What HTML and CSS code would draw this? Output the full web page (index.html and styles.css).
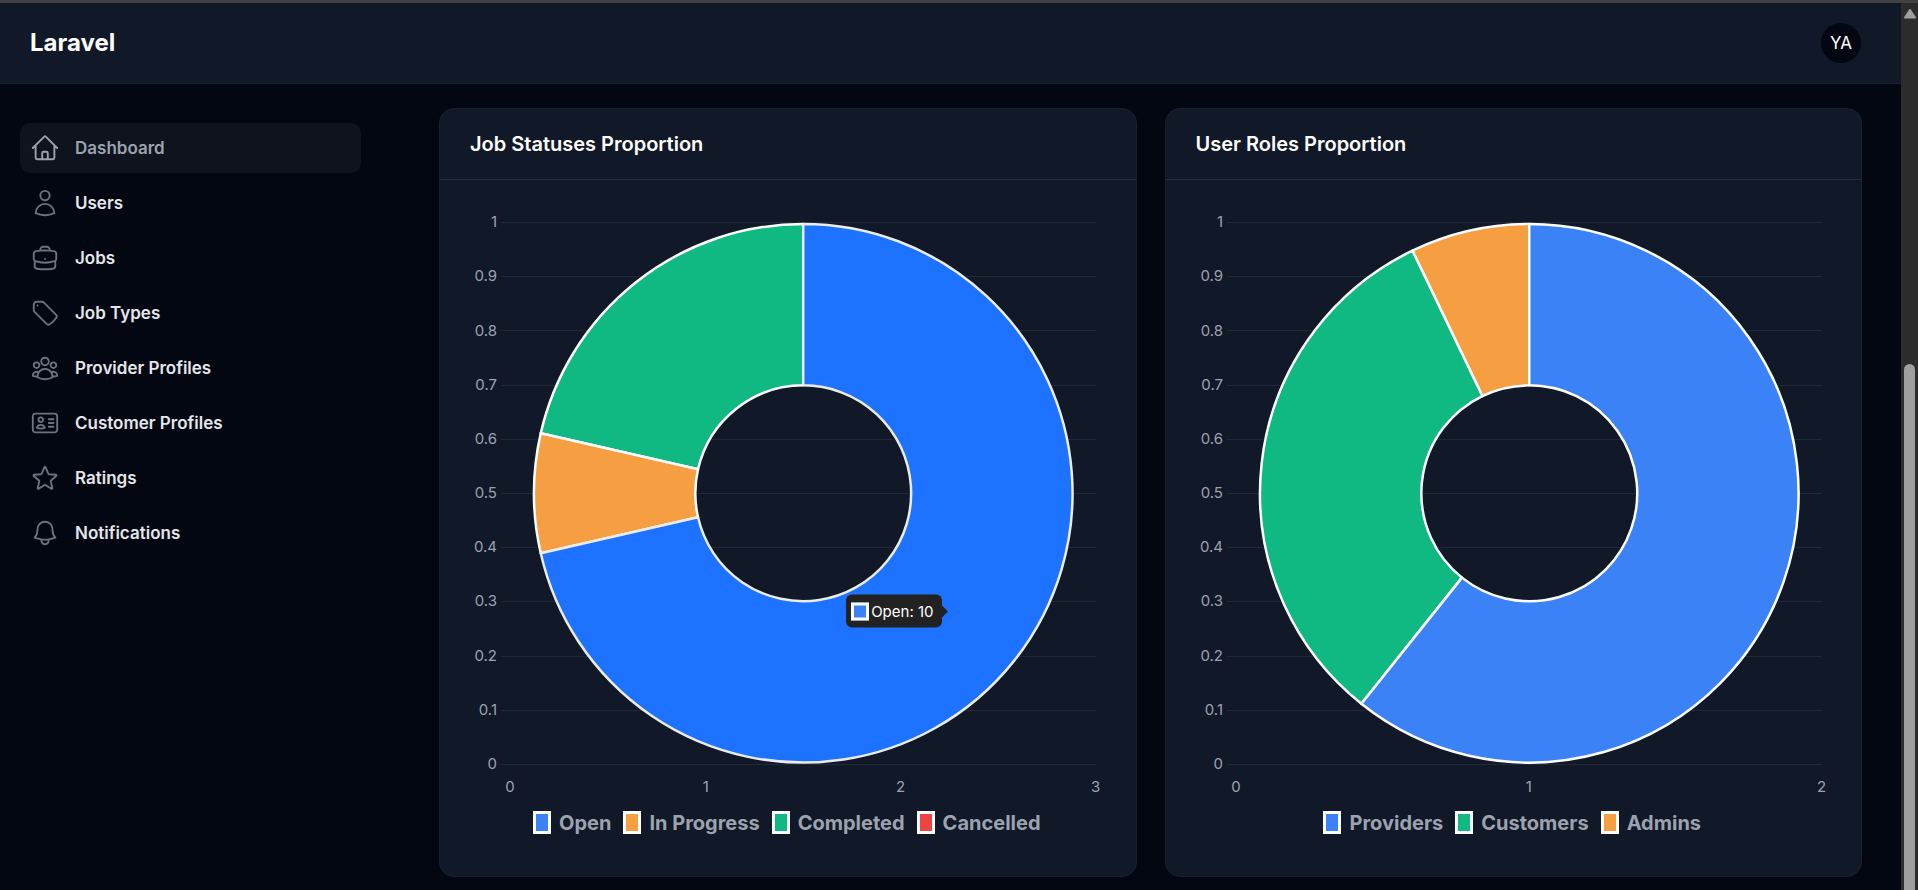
FILE: index.html
```html
<!DOCTYPE html>
<html lang="en">
<head>
<meta charset="utf-8">
<title>Dashboard - Laravel</title>
<meta name="viewport" content="width=device-width, initial-scale=1">
<link rel="stylesheet" href="styles.css">
</head>
<body>
<div class="window">
  <div class="page">
    <header class="topbar">
      <a class="brand" href="#">Laravel</a>
      <button class="avatar" type="button" aria-label="User menu">YA</button>
    </header>
    <div class="layout">
      <nav class="sidebar" aria-label="Main">
        <a class="nav-item is-active" href="#" aria-current="page">
          <svg class="nav-icon" viewBox="0 0 24 24" aria-hidden="true"><path d="m2.25 12 8.954-8.955c.44-.439 1.152-.439 1.591 0L21.75 12M4.5 9.75v10.125c0 .621.504 1.125 1.125 1.125H9.75v-4.875c0-.621.504-1.125 1.125-1.125h2.25c.621 0 1.125.504 1.125 1.125V21h4.125c.621 0 1.125-.504 1.125-1.125V9.75M8.25 21h8.25"/></svg>
          <span>Dashboard</span>
        </a>
        <a class="nav-item" href="#">
          <svg class="nav-icon" viewBox="0 0 24 24" aria-hidden="true"><path d="M15.75 6a3.75 3.75 0 1 1-7.5 0 3.75 3.75 0 0 1 7.5 0ZM4.501 20.118a7.5 7.5 0 0 1 14.998 0A17.933 17.933 0 0 1 12 21.75c-2.676 0-5.216-.584-7.499-1.632Z"/></svg>
          <span>Users</span>
        </a>
        <a class="nav-item" href="#">
          <svg class="nav-icon" viewBox="0 0 24 24" aria-hidden="true"><path d="M20.25 14.15v4.25c0 1.094-.787 2.036-1.872 2.18-2.087.277-4.216.42-6.378.42s-4.291-.143-6.378-.42c-1.085-.144-1.872-1.086-1.872-2.18v-4.25m16.5 0a2.18 2.18 0 0 0 .75-1.661V8.706c0-1.081-.768-2.015-1.837-2.175a48.114 48.114 0 0 0-3.413-.387m4.5 8.006c-.194.165-.42.295-.673.38A23.978 23.978 0 0 1 12 15.75c-2.648 0-5.195-.429-7.577-1.22a2.016 2.016 0 0 1-.673-.38m0 0A2.18 2.18 0 0 1 3 12.489V8.706c0-1.081.768-2.015 1.837-2.175a48.111 48.111 0 0 1 3.413-.387m7.5 0V5.25A2.25 2.25 0 0 0 13.5 3h-3a2.25 2.25 0 0 0-2.25 2.25v.894m7.5 0a48.667 48.667 0 0 0-7.5 0M12 12.75h.008v.008H12v-.008Z"/></svg>
          <span>Jobs</span>
        </a>
        <a class="nav-item" href="#">
          <svg class="nav-icon" viewBox="0 0 24 24" aria-hidden="true"><path d="M9.568 3H5.25A2.25 2.25 0 0 0 3 5.25v4.318c0 .597.237 1.17.659 1.591l9.581 9.581c.699.699 1.78.872 2.607.33a18.095 18.095 0 0 0 5.223-5.223c.542-.827.369-1.908-.33-2.607L11.16 3.66A2.25 2.25 0 0 0 9.568 3Z"/><path d="M6 6h.008v.008H6V6Z"/></svg>
          <span>Job Types</span>
        </a>
        <a class="nav-item" href="#">
          <svg class="nav-icon" viewBox="0 0 24 24" aria-hidden="true"><path d="M18 18.72a9.094 9.094 0 0 0 3.741-.479 3 3 0 0 0-4.682-2.72m.94 3.198.001.031c0 .225-.012.447-.037.666A11.944 11.944 0 0 1 12 21c-2.17 0-4.207-.576-5.963-1.584A6.062 6.062 0 0 1 6 18.719m12 0a5.971 5.971 0 0 0-.941-3.197m0 0A5.995 5.995 0 0 0 12 12.75a5.995 5.995 0 0 0-5.058 2.772m0 0a3 3 0 0 0-4.681 2.72 8.986 8.986 0 0 0 3.74.477m.94-3.197a5.971 5.971 0 0 0-.94 3.197M15 6.75a3 3 0 1 1-6 0 3 3 0 0 1 6 0Zm6 3a2.25 2.25 0 1 1-4.5 0 2.25 2.25 0 0 1 4.5 0Zm-13.5 0a2.25 2.25 0 1 1-4.5 0 2.25 2.25 0 0 1 4.5 0Z"/></svg>
          <span>Provider Profiles</span>
        </a>
        <a class="nav-item" href="#">
          <svg class="nav-icon" viewBox="0 0 24 24" aria-hidden="true"><path d="M15 9h3.75M15 12h3.75M15 15h3.75M4.5 19.5h15a2.25 2.25 0 0 0 2.25-2.25V6.75A2.25 2.25 0 0 0 19.5 4.5h-15a2.25 2.25 0 0 0-2.25 2.25v10.5A2.25 2.25 0 0 0 4.5 19.5Zm6-10.125a1.875 1.875 0 1 1-3.75 0 1.875 1.875 0 0 1 3.75 0Zm1.294 6.336a6.721 6.721 0 0 1-3.17.789 6.721 6.721 0 0 1-3.168-.789 3.376 3.376 0 0 1 6.338 0Z"/></svg>
          <span>Customer Profiles</span>
        </a>
        <a class="nav-item" href="#">
          <svg class="nav-icon" viewBox="0 0 24 24" aria-hidden="true"><path d="M11.48 3.499a.562.562 0 0 1 1.04 0l2.125 5.111a.563.563 0 0 0 .475.345l5.518.442c.499.04.701.663.321.988l-4.204 3.602a.563.563 0 0 0-.182.557l1.285 5.385a.562.562 0 0 1-.84.61l-4.725-2.885a.562.562 0 0 0-.586 0L6.982 20.54a.562.562 0 0 1-.84-.61l1.285-5.386a.562.562 0 0 0-.182-.557l-4.204-3.602a.562.562 0 0 1 .321-.988l5.518-.442a.563.563 0 0 0 .475-.345L11.48 3.5Z"/></svg>
          <span>Ratings</span>
        </a>
        <a class="nav-item" href="#">
          <svg class="nav-icon" viewBox="0 0 24 24" aria-hidden="true"><path d="M14.857 17.082a23.848 23.848 0 0 0 5.454-1.31A8.967 8.967 0 0 1 18 9.75V9A6 6 0 0 0 6 9v.75a8.967 8.967 0 0 1-2.312 6.022c1.733.64 3.56 1.085 5.455 1.31m5.714 0a24.255 24.255 0 0 1-5.714 0m5.714 0a3 3 0 1 1-5.714 0"/></svg>
          <span>Notifications</span>
        </a>
      </nav>
      <main class="widgets">
        <section class="card">
          <h2 class="card-title">Job Statuses Proportion</h2>
          <div class="card-body">
            <div class="chart">
              <svg class="plot" viewBox="0 0 636 590" role="img" aria-label="Job statuses doughnut chart">
                <path class="grid" d="M31 12.5H626M31 66.5H626M31 120.5H626M31 175.5H626M31 229.5H626M31 283.5H626M31 337.5H626M31 391.5H626M31 446.5H626M31 500.5H626M31 554.5H626"/>
                <g class="ticks ticks-y">
                  <text x="27" y="17">1</text><text x="27" y="71">0.9</text><text x="27" y="126">0.8</text><text x="27" y="180">0.7</text><text x="27" y="234">0.6</text><text x="27" y="288">0.5</text><text x="27" y="342">0.4</text><text x="27" y="396">0.3</text><text x="27" y="451">0.2</text><text x="27" y="505">0.1</text><text x="27" y="559">0</text>
                </g>
                <g class="ticks ticks-x">
                  <text x="40" y="582">0</text><text x="236" y="582">1</text><text x="431" y="582">2</text><text x="626" y="582">3</text>
                </g>
                <path class="slice green" d="M70.8 223.5A269.5 269.5 0 0 1 333.5 14V175.5A108 108 0 0 0 228.2 259.5Z"/>
                <path class="slice orange" d="M70.8 343.5A269.5 269.5 0 0 1 70.8 223.5L228.2 259.5A108 108 0 0 0 228.2 307.5Z"/>
                <path class="slice blue-hover" d="M333.5 14A269.5 269.5 0 1 1 70.8 343.5L228.2 307.5A108 108 0 1 0 333.5 175.5Z"/>
              </svg>
              <div class="tooltip" role="tooltip"><span class="tooltip-key"></span>Open: 10</div>
            </div>
            <ul class="legend">
              <li><span class="key blue"></span>Open</li>
              <li><span class="key orange"></span>In Progress</li>
              <li><span class="key green"></span>Completed</li>
              <li><span class="key red"></span>Cancelled</li>
            </ul>
          </div>
        </section>
        <section class="card">
          <h2 class="card-title">User Roles Proportion</h2>
          <div class="card-body">
            <div class="chart">
              <svg class="plot" viewBox="0 0 636 590" role="img" aria-label="User roles doughnut chart">
                <path class="grid" d="M31 12.5H626M31 66.5H626M31 120.5H626M31 175.5H626M31 229.5H626M31 283.5H626M31 337.5H626M31 391.5H626M31 446.5H626M31 500.5H626M31 554.5H626"/>
                <g class="ticks ticks-y">
                  <text x="27" y="17">1</text><text x="27" y="71">0.9</text><text x="27" y="126">0.8</text><text x="27" y="180">0.7</text><text x="27" y="234">0.6</text><text x="27" y="288">0.5</text><text x="27" y="342">0.4</text><text x="27" y="396">0.3</text><text x="27" y="451">0.2</text><text x="27" y="505">0.1</text><text x="27" y="559">0</text>
                </g>
                <g class="ticks ticks-x">
                  <text x="40" y="582">0</text><text x="333" y="582">1</text><text x="626" y="582">2</text>
                </g>
                <path class="slice orange" d="M216.6 40.7A269.5 269.5 0 0 1 333.5 14V175.5A108 108 0 0 0 286.6 186.2Z"/>
                <path class="slice green" d="M165.5 494.2A269.5 269.5 0 0 1 216.6 40.7L286.6 186.2A108 108 0 0 0 266.2 367.9Z"/>
                <path class="slice blue" d="M333.5 14A269.5 269.5 0 1 1 165.5 494.2L266.2 367.9A108 108 0 1 0 333.5 175.5Z"/>
              </svg>
            </div>
            <ul class="legend">
              <li><span class="key blue"></span>Providers</li>
              <li><span class="key green"></span>Customers</li>
              <li><span class="key orange"></span>Admins</li>
            </ul>
          </div>
        </section>
      </main>
    </div>
  </div>
  <div class="scrollbar" aria-hidden="true">
    <svg class="scroll-arrow" viewBox="0 0 12 10"><path d="M6 1 11 8.500H1Z"/></svg>
    <div class="scroll-thumb"></div>
  </div>
</div>
</body>
</html>
```
FILE: styles.css
```css
* {
  box-sizing: border-box;
}

body {
  margin: 0;
  background: #030712;
  color: #fff;
  font-family: Inter, "Liberation Sans", sans-serif;
}

.window {
  display: grid;
  grid-template-columns: minmax(0, 1fr) 17px;
  min-height: 100vh;
  border-top: 3px solid #424242;
}

.topbar {
  display: flex;
  align-items: center;
  justify-content: space-between;
  height: 81px;
  padding: 0 40px 0 30px;
  background: #111827;
  border-bottom: 1px solid #1c212b;
}

.brand {
  color: #fff;
  font-size: 24px;
  font-weight: 700;
  line-height: 32px;
  text-decoration: none;
}

.avatar {
  width: 40px;
  height: 40px;
  padding: 0;
  border: 0;
  border-radius: 50%;
  background: #030712;
  color: #fff;
  font: 400 17px/40px Inter, "Liberation Sans", sans-serif;
}

.layout {
  display: grid;
  grid-template-columns: 399px minmax(0, 1fr);
}

.sidebar {
  display: flex;
  flex-direction: column;
  gap: 5px;
  padding: 39px 38px 39px 20px;
}

.nav-item {
  display: flex;
  align-items: center;
  gap: 15px;
  height: 50px;
  padding: 10px;
  border-radius: 10px;
  color: #e5e7eb;
  font-size: 17px;
  font-weight: 600;
  line-height: 26px;
  text-decoration: none;
}

.nav-item.is-active {
  background: #0f131d;
  color: #9ca3af;
}

.nav-icon {
  width: 30px;
  height: 30px;
  fill: none;
  stroke: #6b7280;
  stroke-width: 1.5;
  stroke-linecap: round;
  stroke-linejoin: round;
}

.is-active .nav-icon {
  stroke: #9ca3af;
}

.widgets {
  display: grid;
  grid-template-columns: repeat(2, minmax(0, 1fr));
  gap: 28px;
  align-items: start;
  padding: 24px 39px 13px 40px;
}

.card {
  border: 1px solid #1b202c;
  border-radius: 15px;
  background: #111827;
}

.card-title {
  margin: 0;
  padding: 20px 30px;
  border-bottom: 1px solid #282e3b;
  font-size: 20px;
  font-weight: 600;
  line-height: 30px;
}

.card-body {
  padding: 30px;
}

.chart {
  position: relative;
}

.plot {
  display: block;
  width: 100%;
  height: auto;
}

.grid {
  fill: none;
  stroke: #1f2937;
  stroke-width: 1;
  shape-rendering: crispEdges;
}

.ticks {
  fill: #9ca3af;
  font-size: 15px;
}

.ticks-y {
  text-anchor: end;
}

.ticks-x {
  text-anchor: middle;
}

.slice {
  stroke: #fff;
  stroke-width: 2.5;
  stroke-linejoin: round;
}

.blue {
  fill: #3b82f6;
  background: #3b82f6;
}

.blue-hover {
  fill: #1d72ff;
  stroke: #ececec;
}

.orange {
  fill: #f59e42;
  background: #f59e42;
}

.green {
  fill: #10b981;
  background: #10b981;
}

.red {
  background: #ef4444;
}

.legend {
  display: flex;
  flex-wrap: wrap;
  justify-content: center;
  gap: 12px;
  margin: 0;
  padding: 11px 2px 11px 0;
  list-style: none;
  color: #9ca3af;
  font-size: 20px;
  font-weight: 700;
  line-height: 24px;
}

.legend li {
  display: flex;
  align-items: center;
  gap: 8px;
}

.key {
  width: 18px;
  height: 23px;
  border: 3px solid #fff;
}

.tooltip {
  position: absolute;
  top: 401px;
  right: 164px;
  display: flex;
  align-items: center;
  gap: 2px;
  height: 33px;
  padding: 0 8px 0 5px;
  border-radius: 6px;
  background: #222;
  color: #fff;
  font-size: 15px;
  font-weight: 400;
  line-height: 18px;
  transform: translateY(-50%);
}

.tooltip::after {
  content: "";
  position: absolute;
  top: 50%;
  left: 100%;
  border: 6px solid transparent;
  border-left-color: #222;
  border-right: 0;
  transform: translateY(-50%);
}

.tooltip-key {
  width: 18px;
  height: 18px;
  border: 3px solid #fff;
  background: #3b82f6;
}

.scrollbar {
  display: flex;
  flex-direction: column;
  align-items: center;
  background: #2c2c2c;
}

.scroll-arrow {
  width: 12px;
  height: 10px;
  margin-top: 6px;
  fill: #9f9f9f;
  stroke: #9f9f9f;
  stroke-width: 2;
  stroke-linejoin: round;
}

.scroll-thumb {
  flex: 1;
  width: 11px;
  margin-top: 345px;
  border-radius: 6px 6px 0 0;
  background: #9f9f9f;
}
```
